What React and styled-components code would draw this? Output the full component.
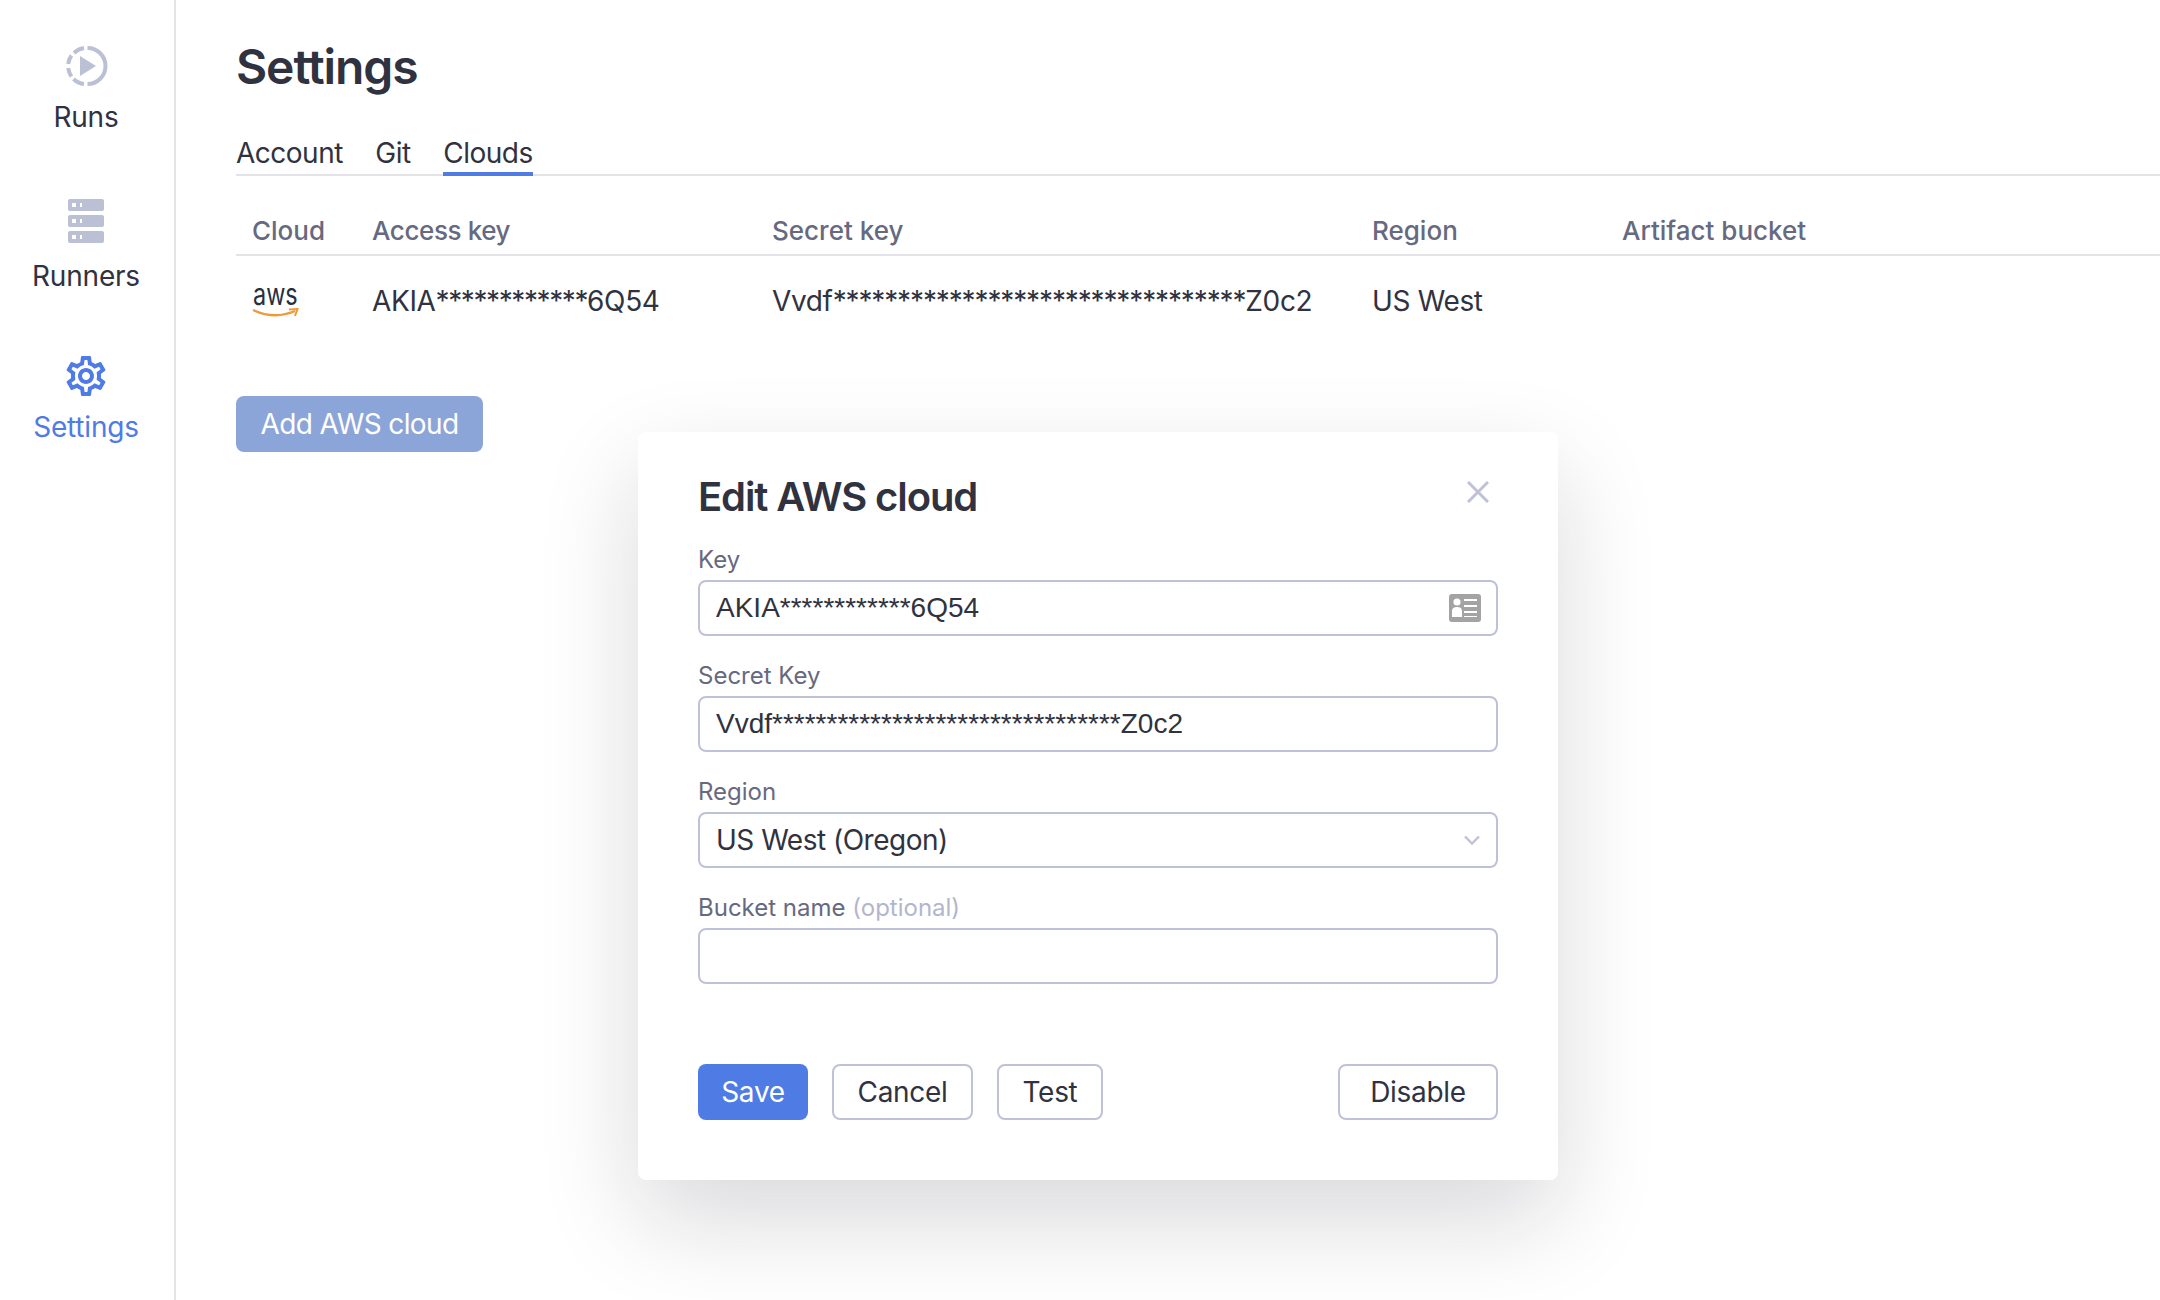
import React from 'react';
import styled, { createGlobalStyle } from 'styled-components';
import { MdOutlineSettings } from 'react-icons/md';

const Global = createGlobalStyle`
  html, body { margin: 0; padding: 0; background: #fff; }
  body { font-family: Inter, "Liberation Sans", sans-serif; color: #30333f; }
  * { box-sizing: border-box; }
`;
const Page = styled.div`display: flex; width: 2160px; height: 1300px; position: relative; overflow: hidden;`;
const Sidebar = styled.nav`
  width: 176px; flex: none; border-right: 2px solid #e3e3e8;
  display: flex; flex-direction: column; align-items: center; padding: 44px 2px 0 0;
`;
const NavItem = styled.div`
  display: flex; flex-direction: column; align-items: center; gap: ${p => p.$gap}px;
  height: ${p => p.$h}px; font-size: 28px; line-height: 34px; letter-spacing: -0.2px;
  color: ${p => p.$active ? '#4f7be5' : '#30333f'};
  svg { display: block; }
`;
const Main = styled.main`flex: 1; padding: 36px 0 0 60px; min-width: 0;`;
const Title = styled.h1`margin: 0; font-size: 48px; line-height: 62px; font-weight: 600; color: #30333f; letter-spacing: -1.1px;`;
const Tabs = styled.div`display: flex; gap: 32.5px; margin-top: 32px; border-bottom: 2px solid #e3e3e8; height: 46px;`;
const Tab = styled.div`
  font-size: 28px; line-height: 38px; height: 46px; padding-top: 4px; color: #30333f; letter-spacing: -0.5px;
  border-bottom: ${p => p.$active ? '4px solid #4f7be5' : 'none'};
`;
const Table = styled.table`border-collapse: collapse; table-layout: fixed; width: 100%; margin-top: 32px;`;
const Th = styled.th`
  text-align: left; font-size: 26px; font-weight: 500; color: #666980; height: 47px; padding: 0 0 0 16px;
  border-bottom: 2px solid #e3e3e8; line-height: 32px;
  letter-spacing: ${p => p.$tight ? '-0.4px' : '0'};
`;
const Td = styled.td`font-size: 28px; height: 90px; padding: 0 0 0 16px; color: #30333f; white-space: nowrap; letter-spacing: -0.35px;`;
const TableStars = styled.span`letter-spacing: ${p => p.$spacing}px;`;
const AwsLogo = styled.div`width: 48px; height: 46px; margin-top: 2px;`;
const AwsWord = styled.span`
  display: block; font-size: 30px; line-height: 30px; color: #252f3e;
  transform: scaleX(0.78); transform-origin: left center; letter-spacing: 0; margin-left: 1px;
`;
const Swoosh = styled.svg`display: block; margin-top: -1px;`;
const PrimaryFaded = styled.button`
  display: block; margin-top: 51px; height: 56px; width: 247px; border: 0; border-radius: 8px;
  background: #8ca5d8; color: #fff; font: 28px Inter, sans-serif; letter-spacing: -0.6px; padding: 0;
`;
const Modal = styled.div`
  position: absolute; left: 638px; top: 432px; width: 920px; height: 748px; background: #fff; border-radius: 8px;
  box-shadow: 0 40px 100px rgba(20, 20, 40, 0.16); padding: 40px 60px 0;
`;
const ModalHead = styled.div`display: flex; justify-content: space-between; align-items: flex-start;`;
const ModalTitle = styled.h2`margin: 0; font-size: 40px; line-height: 50px; font-weight: 600; color: #30333f; letter-spacing: -1.1px;`;
const Close = styled.svg`margin-top: 9px; margin-right: 9px;`;
const Fields = styled.div`display: flex; flex-direction: column; gap: 24px; margin-top: 22px;`;
const Field = styled.label`display: block;`;
const Label = styled.div`font-size: 24px; line-height: 32px; color: #666980; height: 36px;`;
const Optional = styled.span`color: #b3b6cc;`;
const InputBox = styled.div`
  height: 56px; width: 800px; border: 2px solid #bfc1d6; border-radius: 8px; display: flex; align-items: center;
  padding: 0 16px; color: #30333f; justify-content: space-between; white-space: nowrap;
  font: 28px ${p => p.$select ? 'Inter' : '"Liberation Sans"'}, sans-serif;
  letter-spacing: ${p => p.$select ? '-0.5px' : '0'};
`;
const CardWrap = styled.span`display: block; margin-right: -1px;`;
const Actions = styled.div`display: flex; gap: 24px; margin-top: 80px; align-items: center;`;
const Btn = styled.button`
  height: 56px; width: ${p => p.$w}px; border-radius: 8px; font: 28px Inter, sans-serif; letter-spacing: -0.3px;
  border: ${p => p.$primary ? '0' : '2px solid #bfc1d6'};
  background: ${p => p.$primary ? '#4f7be5' : '#fff'};
  color: ${p => p.$primary ? '#fff' : '#30333f'};
  margin-left: ${p => p.$push ? 'auto' : '0'};
  padding: 0;
`;

const RunsIcon = () => (
  <svg width="44" height="44" viewBox="0 0 44 44" fill="none">
    <g stroke="#bcc0d5" strokeWidth="4">
      <path d="M23.5 4 A18 18 0 0 1 23.5 40" />
      <path d="M20 40 A18 18 0 0 1 9.5 35" />
      <path d="M7.5 32.5 A18 18 0 0 1 4.2 24" />
      <path d="M4.2 20 A18 18 0 0 1 7.5 11.5" />
      <path d="M10 9 A18 18 0 0 1 20 4" />
    </g>
    <path d="M16 12 L32 22 L16 32 Z" fill="#bcc0d5" />
  </svg>
);
const RunnersIcon = () => (
  <svg width="44" height="44" viewBox="0 0 36 44" fill="#bcc0d5">
    {[0, 16, 32].map(y => (
      <g key={y}>
        <rect y={y} width="36" height="12" rx="2" />
        <rect x="4" y={y + 4} width="4" height="4" fill="#fff" />
        <rect x="12" y={y + 4} width="2" height="4" fill="#fff" />
      </g>
    ))}
  </svg>
);
const CardIcon = () => (
  <svg width="32" height="28" viewBox="0 0 32 28" style={{ display: 'block' }}>
    <rect width="32" height="28" rx="3" fill="#a3a3a3" />
    <circle cx="8" cy="8" r="3.6" fill="#fff" />
    <path d="M3 23 V17 Q3 13 8 13 Q13 13 13 17 V23 Z" fill="#fff" />
    <path d="M15 5h13v2h-13zM15 11h13v2h-13zM15 17h13v2h-13zM15 22h13v1h-13z" fill="#fff" />
  </svg>
);

export default function App() {
  return (
    <Page>
      <Global />
      <Sidebar>
        <NavItem $h={155} $gap={12}><RunsIcon /><span>Runs</span></NavItem>
        <NavItem $h={153} $gap={16}><RunnersIcon /><span>Runners</span></NavItem>
        <NavItem $active $gap={10}><MdOutlineSettings size={48} color="#4f7be5" /><span>Settings</span></NavItem>
      </Sidebar>
      <Main>
        <Title>Settings</Title>
        <Tabs>
          <Tab>Account</Tab>
          <Tab>Git</Tab>
          <Tab $active>Clouds</Tab>
        </Tabs>
        <Table>
          <colgroup>
            <col width="120" /><col width="400" /><col width="600" /><col width="250" /><col />
          </colgroup>
          <thead>
            <tr><Th>Cloud</Th><Th $tight>Access key</Th><Th>Secret key</Th><Th>Region</Th><Th>Artifact bucket</Th></tr>
          </thead>
          <tbody>
            <tr>
              <Td>
                <AwsLogo>
                  <AwsWord>aws</AwsWord>
                  <Swoosh width="47" height="11" viewBox="0 0 47 11" fill="none">
                    <path d="M1 2 Q22 12 43 3" stroke="#f09a37" strokeWidth="2.4" />
                    <path d="M37 1.5 L45.5 1 L43 8" stroke="#f09a37" strokeWidth="2" />
                  </Swoosh>
                </AwsLogo>
              </Td>
              <Td>AKIA<TableStars $spacing={-1.4}>************</TableStars>6Q54</Td>
              <Td>Vvdf<TableStars $spacing={-1.13}>********************************</TableStars>Z0c2</Td>
              <Td>US West</Td>
              <Td />
            </tr>
          </tbody>
        </Table>
        <PrimaryFaded>Add AWS cloud</PrimaryFaded>
      </Main>
      <Modal>
        <ModalHead>
          <ModalTitle>Edit AWS cloud</ModalTitle>
          <Close width="22" height="22" viewBox="0 0 22 22" fill="none" stroke="#bfc1d6" strokeWidth="3">
            <path d="M1 1 L21 21 M21 1 L1 21" />
          </Close>
        </ModalHead>
        <Fields>
          <Field>
            <Label>Key</Label>
            <InputBox><span>AKIA************6Q54</span><CardWrap><CardIcon /></CardWrap></InputBox>
          </Field>
          <Field>
            <Label>Secret Key</Label>
            <InputBox><span>Vvdf********************************Z0c2</span></InputBox>
          </Field>
          <Field>
            <Label>Region</Label>
            <InputBox $select>
              <span>US West (Oregon)</span>
              <svg width="16" height="10" viewBox="0 0 16 10" fill="none" stroke="#bfc1d6" strokeWidth="2.4"><path d="M1 1.5 L8 8.5 L15 1.5" /></svg>
            </InputBox>
          </Field>
          <Field>
            <Label>Bucket name <Optional>(optional)</Optional></Label>
            <InputBox />
          </Field>
        </Fields>
        <Actions>
          <Btn $primary $w={110}>Save</Btn>
          <Btn $w={141}>Cancel</Btn>
          <Btn $w={106}>Test</Btn>
          <Btn $w={160} $push>Disable</Btn>
        </Actions>
      </Modal>
    </Page>
  );
}
